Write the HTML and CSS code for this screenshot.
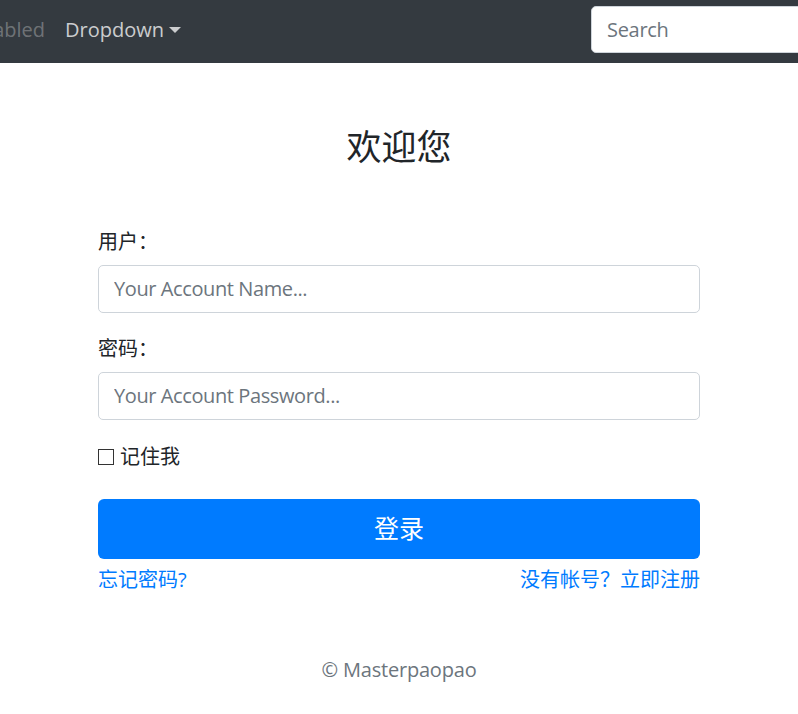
FILE: index.html
```html
<!DOCTYPE html>
<html lang="zh-CN">
<head>
<meta charset="utf-8">
<title>登录</title>
<link rel="stylesheet" href="styles.css">
</head>
<body>
<nav class="navbar">
  <div class="nav-inner">
    <ul class="nav-left">
      <li><a class="nav-link disabled" href="#">Disabled</a></li>
      <li><a class="nav-link dropdown" href="#">Dropdown<span class="caret"></span></a></li>
    </ul>
    <form class="search-form">
      <input class="search-input" type="search" placeholder="Search">
    </form>
  </div>
</nav>
<main class="login">
  <h3 class="title">欢迎您</h3>
  <form class="login-form">
    <div class="form-group">
      <label class="field-label" for="user">用户：</label>
      <input class="form-control" id="user" type="text" placeholder="Your Account Name...">
    </div>
    <div class="form-group">
      <label class="field-label" for="pwd">密码：</label>
      <input class="form-control" id="pwd" type="password" placeholder="Your Account Password...">
    </div>
    <label class="remember"><input class="check" type="checkbox"><span>记住我</span></label>
    <button class="btn-login" type="button">登录</button>
    <div class="links">
      <a href="#">忘记密码?</a>
      <a href="#">没有帐号？立即注册</a>
    </div>
  </form>
  <footer class="footer">© Masterpaopao</footer>
</main>
</body>
</html>
```

FILE: styles.css
```css
* { box-sizing: border-box; }
html, body { margin: 0; padding: 0; }
body {
  font-family: "Open Sans", "Noto Sans CJK SC", sans-serif;
  font-size: 20px;
  line-height: 1.5;
  color: #212529;
  background: #fff;
  overflow: hidden;
}
.navbar {
  background: #343a40;
  height: 63px;
  overflow: hidden;
}
.nav-inner {
  display: flex;
  align-items: center;
  justify-content: space-between;
  height: 58px;
  margin-right: -60px;
}
.nav-left {
  list-style: none;
  margin: 0;
  padding: 0;
  display: flex;
  justify-content: flex-end;
  width: 191px;
  flex: 0 0 191px;
}
.nav-left li { flex: 0 0 auto; }
.nav-link {
  display: block;
  padding: 9px 10px 7px;
  text-decoration: none;
  white-space: nowrap;
  color: rgba(255,255,255,.75);
}
.nav-link.disabled { color: rgba(255,255,255,.3); }
.caret {
  display: inline-block;
  margin-left: 5px;
  vertical-align: 4px;
  border-top: 6px solid;
  border-left: 6px solid transparent;
  border-right: 6px solid transparent;
}
.search-form { margin: 0; flex: 0 0 auto; }
.search-input {
  display: block;
  width: 267px;
  height: 47px;
  padding: 6px 15px;
  font: inherit;
  font-size: 20px;
  letter-spacing: -0.3px;
  color: #495057;
  background: #fff;
  border: 1px solid #ced4da;
  border-radius: 5px;
}
.search-input::placeholder, .form-control::placeholder { color: #6c757d; }

.login {
  width: 602px;
  margin: 0 auto;
  padding-top: 63px;
}
.title {
  margin: 0 0 59px;
  text-align: center;
  font-size: 35px;
  font-weight: 400;
  line-height: 42px;
}
.login-form { margin: 0; }
.form-group { margin-bottom: 21.5px; }
.field-label {
  display: block;
  line-height: 30px;
  margin-bottom: 8px;
}
.form-control {
  display: block;
  width: 100%;
  height: 47.5px;
  padding: 6px 15px;
  font: inherit;
  font-size: 20px;
  letter-spacing: -0.4px;
  color: #495057;
  background: #fff;
  border: 1px solid #ced4da;
  border-radius: 5px;
}
.remember {
  display: flex;
  align-items: center;
  line-height: 30px;
  padding-top: 1px;
}
.check {
  appearance: none;
  -webkit-appearance: none;
  width: 16px;
  height: 16px;
  margin: 0 6px 0 0;
  border: 1.3px solid #333;
  background: #fff;
  border-radius: 0;
}
.btn-login {
  display: block;
  width: 100%;
  height: 60px;
  margin-top: 27px;
  border: none;
  border-radius: 6px;
  background: #007bff;
  color: #fff;
  font: inherit;
  font-size: 25px;
}
.links {
  display: flex;
  justify-content: space-between;
  margin-top: 6px;
  line-height: 30px;
}
.links a { color: #007bff; text-decoration: none; }
.footer {
  margin-top: 60px;
  text-align: center;
  color: #6c757d;
  line-height: 30px;
  letter-spacing: -0.2px;
}
```
